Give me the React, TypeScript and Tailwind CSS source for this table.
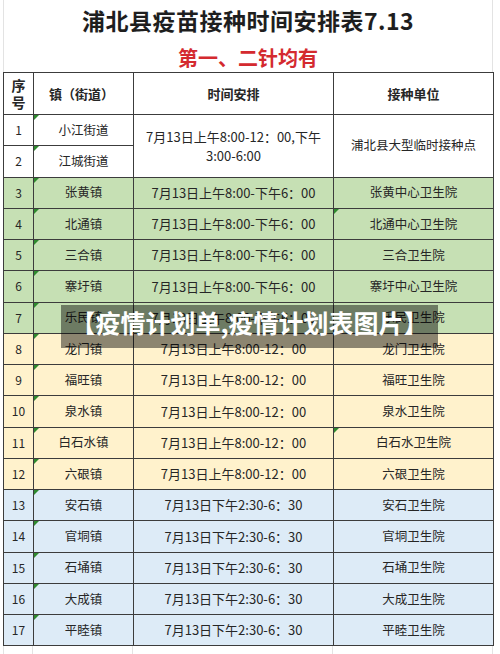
const FONT = { fontFamily: '"Noto Sans CJK SC", "Noto Sans", sans-serif' };

type Tone = "green" | "yellow" | "blue";

const GREEN_TIME = "7月13日上午8:00-下午6：00";
const YELLOW_TIME = "7月13日上午8:00-12：00";
const BLUE_TIME = "7月13日下午2:30-6：30";

const rows: { n: number; town: string; time: string; unit: string; tone: Tone; flag?: boolean }[] = [
  { n: 3, town: "张黄镇", time: GREEN_TIME, unit: "张黄中心卫生院", tone: "green" },
  { n: 4, town: "北通镇", time: GREEN_TIME, unit: "北通中心卫生院", tone: "green", flag: true },
  { n: 5, town: "三合镇", time: GREEN_TIME, unit: "三合卫生院", tone: "green" },
  { n: 6, town: "寨圩镇", time: GREEN_TIME, unit: "寨圩中心卫生院", tone: "green" },
  { n: 7, town: "乐民镇", time: GREEN_TIME, unit: "乐民卫生院", tone: "green" },
  { n: 8, town: "龙门镇", time: YELLOW_TIME, unit: "龙门卫生院", tone: "yellow" },
  { n: 9, town: "福旺镇", time: YELLOW_TIME, unit: "福旺卫生院", tone: "yellow" },
  { n: 10, town: "泉水镇", time: YELLOW_TIME, unit: "泉水卫生院", tone: "yellow" },
  { n: 11, town: "白石水镇", time: YELLOW_TIME, unit: "白石水卫生院", tone: "yellow", flag: true },
  { n: 12, town: "六硍镇", time: YELLOW_TIME, unit: "六硍卫生院", tone: "yellow" },
  { n: 13, town: "安石镇", time: BLUE_TIME, unit: "安石卫生院", tone: "blue" },
  { n: 14, town: "官垌镇", time: BLUE_TIME, unit: "官垌卫生院", tone: "blue" },
  { n: 15, town: "石埇镇", time: BLUE_TIME, unit: "石埇卫生院", tone: "blue" },
  { n: 16, town: "大成镇", time: BLUE_TIME, unit: "大成卫生院", tone: "blue" },
  { n: 17, town: "平睦镇", time: BLUE_TIME, unit: "平睦卫生院", tone: "blue" },
];

const toneBg: Record<Tone, string> = {
  green: "bg-[#c6e0b4]",
  yellow: "bg-[#fff2cc]",
  blue: "bg-[#ddebf7]",
};

// little green "number stored as text" marker in the corner of a cell
function Flag() {
  return (
    <span className="absolute left-0 top-0 h-0 w-0 border-t-[5px] border-r-[5px] border-t-[#2f8a2f] border-r-transparent" />
  );
}

const cell = "border border-[#3c3c3c] text-center align-middle p-0";

export default function App() {
  return (
    <div className="relative h-[654px] w-[500px] overflow-hidden bg-white text-[#262626]" style={FONT}>
      <div className="ml-[3px] w-[490px] border-x border-[#e3e3e3]">
        <div className="flex h-[40px] items-center justify-center pt-[1px] text-[23px] font-bold text-[#1e1e1e] tracking-[0.5px]">
          浦北县疫苗接种时间安排表7.13
        </div>
        <div className="flex h-[32px] items-center justify-center pt-[4px] text-[20px] font-bold text-[#d42a2f]">
          第一、二针均有
        </div>
      </div>

      <table className="ml-[3px] w-[490px] table-fixed border-collapse">
        <colgroup>
          <col className="w-[30px]" />
          <col className="w-[100px]" />
          <col className="w-[200px]" />
          <col className="w-[160px]" />
        </colgroup>
        <thead>
          <tr className="h-[42px] text-[13px] font-bold">
            <th className={cell}>
              <div className="text-[14px] leading-[17px]">
                序<br />号
              </div>
            </th>
            <th className={cell}>
              <span className="pr-[4px]">镇（街道）</span>
            </th>
            <th className={cell}>时间安排</th>
            <th className={cell}>接种单位</th>
          </tr>
        </thead>
        <tbody>
          <tr className="h-[31.25px]">
            <td className={`${cell} text-[12px]`}>1</td>
            <td className={`${cell} relative text-[12.5px]`}>
              <Flag />
              小江街道
            </td>
            <td rowSpan={2} className={`${cell} text-[13px] leading-[19px]`}>
              7月13日上午8:00-12：00,下午
              <br />
              3:00-6:00
            </td>
            <td rowSpan={2} className={`${cell} text-[12.5px]`}>
              浦北县大型临时接种点
            </td>
          </tr>
          <tr className="h-[31.25px]">
            <td className={`${cell} text-[12px]`}>2</td>
            <td className={`${cell} relative text-[12.5px]`}>
              <Flag />
              江城街道
            </td>
          </tr>
          {rows.map((r) => (
            <tr key={r.n} className={`h-[31.25px] ${toneBg[r.tone]}`}>
              <td className={`${cell} text-[12px]`}>{r.n}</td>
              <td className={`${cell} relative text-[12.5px]`}>
                <Flag />
                {r.town}
              </td>
              <td className={`${cell} text-[13px]`}>{r.time}</td>
              <td className={`${cell} relative text-[12.5px]`}>
                {r.flag && <Flag />}
                {r.unit}
              </td>
            </tr>
          ))}
        </tbody>
      </table>

      <div className="ml-[3px] grid h-[20px] w-[490px] grid-cols-[30px_100px_200px_160px]">
        <div className="border-x border-[#e3e3e3]" />
        <div className="border-r border-[#e3e3e3]" />
        <div className="border-r border-[#e3e3e3]" />
        <div className="border-r border-[#e3e3e3]" />
      </div>

      <div className="absolute left-[61px] top-[305px] flex h-[43px] w-[377px] items-start justify-center bg-black/45 pt-[1px]">
        <span className="text-[25px] font-bold leading-[32px] text-white">【疫情计划单,疫情计划表图片】</span>
      </div>
    </div>
  );
}
